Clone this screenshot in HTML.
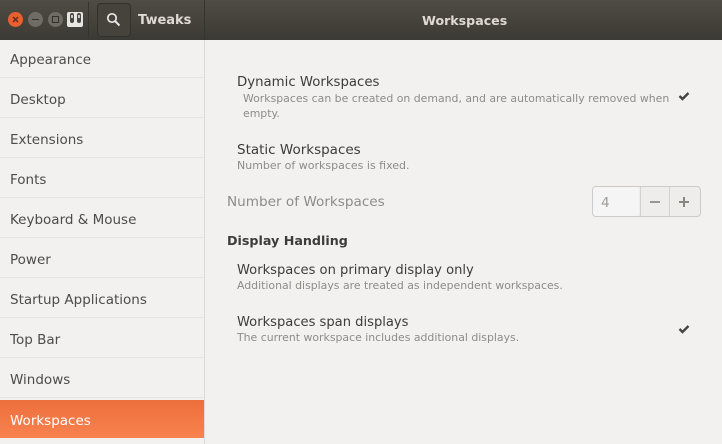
<!DOCTYPE html>
<html><head><meta charset="utf-8"><style>
html,body{margin:0;padding:0;width:722px;height:444px;overflow:hidden;background:#f2f1f0}
body{position:relative;font-family:"DejaVu Sans","Liberation Sans",sans-serif;color:#3c3c3c}
.t{position:absolute;white-space:nowrap;line-height:16px}
.side{left:10px;font-size:13.5px;color:#4c4c4c}
.h{font-size:13.3px;color:#3c3c3c}
.s{font-size:10.9px;color:#8f8b87}
.r{position:absolute;left:0;width:204px;height:1px;background:#e5e3e1}
</style></head><body>
<div style="position:absolute;left:0;top:0;width:722px;height:40px;background:linear-gradient(#4f4c45,#3c3a34)"></div>
<div style="position:absolute;left:8px;top:12px;width:15px;height:15px;border-radius:50%;background:#e95f2f"></div>
<svg style="position:absolute;left:8px;top:12px" width="15" height="15"><path d="M5 5l5 5M10 5l-5 5" stroke="#5a2a18" stroke-width="1.3"/></svg>
<div style="position:absolute;left:28px;top:12px;width:15px;height:15px;border-radius:50%;background:#6f6c65"></div>
<div style="position:absolute;left:32px;top:19px;width:7px;height:1px;background:#33312c"></div>
<div style="position:absolute;left:48px;top:12px;width:15px;height:15px;border-radius:50%;background:#6f6c65"></div>
<div style="position:absolute;left:52px;top:16px;width:5px;height:5px;border:1px solid #33312c"></div>
<div style="position:absolute;left:67px;top:12px;width:16px;height:15px;background:#e8e6e2;border-radius:2px"></div>
<div style="position:absolute;left:70px;top:13px;width:4px;height:10px;background:#4a4843;border-radius:2px"></div>
<div style="position:absolute;left:77px;top:13px;width:4px;height:10px;background:#4a4843;border-radius:2px"></div>
<div style="position:absolute;left:71px;top:15px;width:2px;height:3px;background:#c8c6c2"></div>
<div style="position:absolute;left:78px;top:15px;width:2px;height:3px;background:#c8c6c2"></div>
<div style="position:absolute;left:88px;top:2px;width:1px;height:36px;background:#36342f"></div>
<div style="position:absolute;left:97px;top:3px;width:32px;height:32px;border:1px solid #33312c;border-radius:4px;background:#45433c"></div>
<svg style="position:absolute;left:105px;top:11px" width="18" height="18"><circle cx="7" cy="7" r="4.2" fill="none" stroke="#e8e6e2" stroke-width="1.7"/><path d="M10 10l4.5 4.5" stroke="#e8e6e2" stroke-width="2"/></svg>
<div class="t" style="left:138px;top:13px;font-size:13px;font-weight:bold;color:#dfdbd2">Tweaks</div>
<div style="position:absolute;left:204px;top:0;width:1px;height:40px;background:#36342f"></div>
<div class="t" style="left:422px;top:13px;font-size:12.6px;font-weight:bold;color:#dfdbd2">Workspaces</div>

<div style="position:absolute;left:204px;top:40px;width:1px;height:404px;background:#dcdad7"></div>
<div class="t side" style="top:52px">Appearance</div><div class="r" style="top:77px"></div>
<div class="t side" style="top:92px">Desktop</div><div class="r" style="top:117px"></div>
<div class="t side" style="top:132px">Extensions</div><div class="r" style="top:157px"></div>
<div class="t side" style="top:172px">Fonts</div><div class="r" style="top:197px"></div>
<div class="t side" style="top:212px">Keyboard &amp; Mouse</div><div class="r" style="top:237px"></div>
<div class="t side" style="top:252px">Power</div><div class="r" style="top:277px"></div>
<div class="t side" style="top:292px">Startup Applications</div><div class="r" style="top:317px"></div>
<div class="t side" style="top:332px">Top Bar</div><div class="r" style="top:357px"></div>
<div class="t side" style="top:372px">Windows</div><div class="r" style="top:397px"></div>
<div style="position:absolute;left:0;top:400px;width:204px;height:38px;background:linear-gradient(#ec6f3c,#f9824f)"></div>
<div class="t side" style="top:413px;color:#fff">Workspaces</div>

<div class="t h" style="left:237px;top:75px">Dynamic Workspaces</div>
<div class="t s" style="left:243px;top:91px">Workspaces can be created on demand, and are automatically removed when</div>
<div class="t s" style="left:243px;top:106px">empty.</div>
<svg style="position:absolute;left:678px;top:89px" width="14" height="14"><path d="M1.5 7l3 3 6-6" fill="none" stroke="#444" stroke-width="2.4"/></svg>
<div class="t h" style="left:237px;top:142px;font-size:13.5px">Static Workspaces</div>
<div class="t s" style="left:237px;top:158px;font-size:11px">Number of workspaces is fixed.</div>
<div class="t" style="left:227px;top:194px;font-size:13.6px;color:#8f8b87">Number of Workspaces</div>
<div style="position:absolute;left:592px;top:186px;width:107px;height:29px;border:1px solid #cdcbc8;border-radius:4px;background:#eeedec"></div>
<div style="position:absolute;left:593px;top:187px;width:46px;height:29px;background:#f4f5f4;border-radius:3px"></div>
<div style="position:absolute;left:640px;top:187px;width:1px;height:29px;background:#d4d2cf"></div>
<div style="position:absolute;left:669px;top:187px;width:1px;height:29px;background:#d4d2cf"></div>
<div class="t" style="left:601px;top:195px;font-size:13.5px;color:#a09c98">4</div>
<div style="position:absolute;left:650px;top:201px;width:10px;height:2px;background:#9a9793"></div>
<div style="position:absolute;left:679px;top:201px;width:10px;height:2px;background:#8a8783"></div>
<div style="position:absolute;left:683px;top:197px;width:2px;height:10px;background:#8a8783"></div>
<div class="t" style="left:227px;top:233px;font-size:12.7px;font-weight:bold;color:#3c3c3c">Display Handling</div>
<div class="t h" style="left:237px;top:263px;font-size:13.1px">Workspaces on primary display only</div>
<div class="t s" style="left:237px;top:278px">Additional displays are treated as independent workspaces.</div>
<div class="t h" style="left:237px;top:315px;font-size:13.1px">Workspaces span displays</div>
<div class="t s" style="left:237px;top:330px">The current workspace includes additional displays.</div>
<svg style="position:absolute;left:678px;top:322px" width="14" height="14"><path d="M1.5 7l3 3 6-6" fill="none" stroke="#444" stroke-width="2.4"/></svg>
</body></html>
